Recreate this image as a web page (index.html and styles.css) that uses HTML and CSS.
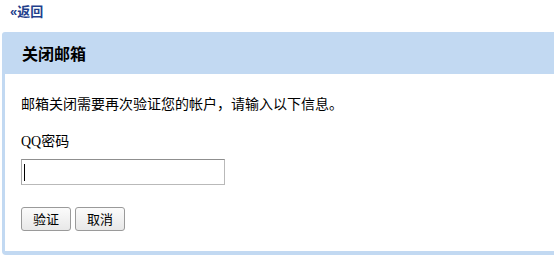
FILE: index.html
```html
<!DOCTYPE html>
<html lang="zh-CN">
<head>
<meta charset="utf-8">
<title>关闭邮箱</title>
<link rel="stylesheet" href="styles.css">
</head>
<body>
<div class="topbar"><a class="back" href="#"><span class="raquo">&laquo;</span>返回</a></div>
<div class="panel">
  <div class="panel-head">关闭邮箱</div>
  <div class="panel-body">
    <p class="intro">邮箱关闭需要再次验证您的帐户，请输入以下信息。</p>
    <div class="label">QQ密码</div>
    <div class="field"><input class="pwd" type="password"><span class="caret"></span></div>
    <div class="actions">
      <button class="btn" type="button">验证</button>
      <button class="btn" type="button">取消</button>
    </div>
  </div>
</div>
</body>
</html>
```
FILE: styles.css
```css
html, body {
  margin: 0;
  padding: 0;
  background: #fff;
  overflow: hidden;
}
body {
  font-family: "Liberation Serif", "Noto Sans CJK SC", serif;
  font-size: 14px;
  color: #000;
}
.topbar {
  height: 22px;
  line-height: 22px;
  padding-left: 10px;
}
.back {
  font-family: "Noto Sans CJK SC", sans-serif;
  font-size: 13px;
  font-weight: 700;
  color: #1f3f8c;
  text-decoration: none;
}
.raquo {
  font-family: "Liberation Sans", sans-serif;
  font-size: 13px;
  margin-right: 0;
}
.panel {
  margin: 10px 0 0 2px;
  border-left: 3px solid #c2d9f2;
  border-bottom: 4px solid #c2d9f2;
  border-top-left-radius: 3px;
  border-bottom-left-radius: 4px;
}
.panel-head {
  height: 42px;
  line-height: 42px;
  background: #c2d9f2;
  padding-left: 17px;
  font-family: "Noto Sans CJK SC", sans-serif;
  font-size: 16px;
  font-weight: 700;
  color: #000;
}
.panel-body {
  padding: 19px 16px 20px 16px;
}
.intro {
  margin: 0;
  line-height: 20px;
  font-family: "Noto Sans CJK SC", sans-serif;
  font-size: 14px;
}
.label {
  margin-top: 19px;
  line-height: 20px;
  font-size: 14px;
}
.field {
  position: relative;
  margin-top: 7px;
  width: 204px;
  height: 26px;
}
.pwd {
  box-sizing: border-box;
  width: 204px;
  height: 26px;
  margin: 0;
  padding: 0 4px;
  border: 1px solid #b9b9b9;
  border-top-color: #8f8f8f;
  border-left-color: #a8a8a8;
  outline: none;
  background: #fff;
}
.caret {
  position: absolute;
  left: 3px;
  top: 5px;
  width: 1px;
  height: 17px;
  background: #000;
}
.actions {
  display: flex;
  gap: 4px;
  margin-top: 22px;
}
.btn {
  box-sizing: border-box;
  height: 24px;
  padding: 0 11px;
  margin: 0;
  border: 1px solid #9a9a9a;
  border-radius: 3px;
  background: linear-gradient(#fbfbfb, #e8e8e8);
  font-family: "Noto Sans CJK SC", sans-serif;
  font-size: 13px;
  line-height: 22px;
  color: #000;
}
```
